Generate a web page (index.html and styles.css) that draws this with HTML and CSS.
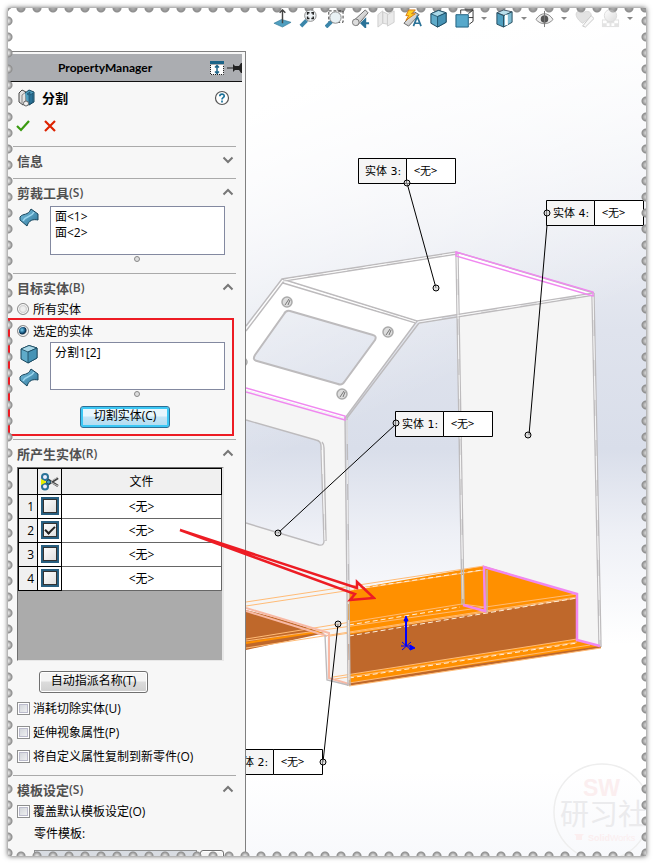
FILE: index.html
```html
<!DOCTYPE html>
<html lang="zh-CN">
<head>
    <meta charset="UTF-8">
    <meta name="viewport" content="width=device-width, initial-scale=1.0">
    <title>PropertyManager - 分割</title>
    <link rel="stylesheet" href="styles.css">
</head>
<body>
    <!-- shared icons -->
    <svg class="defs" aria-hidden="true">
        <defs>
            <linearGradient id="blue" x1="0" y1="0" x2="1" y2="1">
                <stop offset="0" stop-color="#7cc3e0"/>
                <stop offset="1" stop-color="#2a7297"/>
            </linearGradient>
            <linearGradient id="grey" x1="0" y1="0" x2="1" y2="1">
                <stop offset="0" stop-color="#fff"/>
                <stop offset="1" stop-color="#aaa"/>
            </linearGradient>
        </defs>
        <symbol id="chevron" viewBox="0 0 12 8">
            <path d="M1.5 6.500 6 2l4.500 4.500" fill="none" stroke="#777" stroke-width="2"/>
        </symbol>
        <symbol id="surface" viewBox="0 0 20 20">
            <path d="M1 9C4 5 9 8 12 1L19 6V12C14 11 10 12 8 18L1 12z" fill="url(#blue)" stroke="#17455c"/>
            <path d="M4 13C7 7 12 10 15 4" fill="none" stroke="#9bd6ee" stroke-width="1.500"/>
        </symbol>
        <symbol id="cube" viewBox="0 0 20 20">
            <path d="M2 5l8-3.500L18 4v10l-9 5-7-4z" fill="#5fabc9" stroke="#17455c"/>
            <path d="M2 5l7 3 9-4-8-2.500z" fill="#a9d8e8" stroke="#17455c" stroke-width=".8"/>
            <path d="M9 8v11l9-5V4z" fill="#4693b5" stroke="#17455c" stroke-width=".8"/>
        </symbol>
    </svg>

    <main class="sheet">
        <form class="panel">
            <header class="panel-header">
                <h1>PropertyManager</h1>
                <svg width="14" height="14" viewBox="0 0 14 14">
                    <path d="M0 0h14v3H0z" fill="#1c6488"/>
                    <path d="M.5 4v9.500h13V4" fill="#fff" stroke="#222" stroke-dasharray="1 1"/>
                    <path d="M7 5v7M5 6.500 7 4.500l2 2M5 10.500l2 2 2-2" fill="none" stroke="#1c6488" stroke-width="1.500"/>
                </svg>
                <svg width="15" height="10" viewBox="0 0 15 10">
                    <path d="M0 4.500h6V1l2 2h4l2-3h1v10h-1l-2-3H8L6 9V5.500H0z" fill="#222"/>
                </svg>
            </header>

            <div class="command">
                <div class="command-title">
                    <svg width="18" height="18" viewBox="0 0 18 18">
                        <path d="M1 4l3-3 4 2v11l-3 2-4-3z" fill="#e2e2e2" stroke="#444"/>
                        <path d="M4 6v9M4 6l4-3" stroke="#888"/>
                        <path d="M7 4l4-3 5 2v10l-5 3-2-1" fill="#4f9fc0" stroke="#17455c"/>
                        <path d="M9 5l3-2v3l3-2v9l-4 3V6z" fill="#2a7297" stroke="#17455c" stroke-width=".6"/>
                        <circle cx="8" cy="14.500" r="2.500" fill="#eee" stroke="#666"/>
                    </svg>
                    <h2>分割</h2>
                    <button type="button" class="help" aria-label="帮助">
                        <svg width="16" height="16" viewBox="0 0 16 16">
                            <circle cx="8" cy="8" r="6.500" fill="#fff" stroke="#555" stroke-width="1.200"/>
                            <path d="M5.800 6.300c0-3 4.600-2.800 4.400-.2C10.100 7.700 8 7.600 8 9.500M8 10.500v2" fill="none" stroke="#1d739c" stroke-width="1.700"/>
                        </svg>
                    </button>
                </div>
                <div class="command-actions">
                    <button type="button" aria-label="确定">
                        <svg width="14" height="12" viewBox="0 0 14 12"><path d="M1 6l4 4 8-9" fill="none" stroke="#3a9a10" stroke-width="2.200"/></svg>
                    </button>
                    <button type="button" aria-label="取消">
                        <svg width="12" height="12" viewBox="0 0 12 12"><path d="M1 1l10 10M11 1 1 11" stroke="#dd2200" stroke-width="2.200"/></svg>
                    </button>
                </div>
            </div>

            <section class="group group-info">
                <h3>信息<svg class="chevron down"><use href="#chevron"/></svg></h3>
            </section>

            <section class="group group-tools">
                <h3>剪裁工具<small>(S)</small><svg class="chevron"><use href="#chevron"/></svg></h3>
                <div class="picker picker-tools">
                    <div class="picker-icons"><svg><use href="#surface"/></svg></div>
                    <select multiple aria-label="剪裁工具">
                        <option>面&lt;1&gt;</option>
                        <option>面&lt;2&gt;</option>
                    </select>
                </div>
                <i class="grip"></i>
            </section>

            <section class="group group-target">
                <h3>目标实体<small>(B)</small><svg class="chevron"><use href="#chevron"/></svg></h3>
                <label class="radio"><input type="radio" name="target">所有实体</label>
                <label class="radio"><input type="radio" name="target" checked>选定的实体</label>
                <div class="picker">
                    <div class="picker-icons">
                        <svg><use href="#cube"/></svg>
                        <svg><use href="#surface"/></svg>
                    </div>
                    <select multiple aria-label="选定的实体">
                        <option>分割1[2]</option>
                    </select>
                </div>
                <i class="grip"></i>
                <button type="button" class="btn btn-primary">切割实体(C)</button>
                <div class="marker"></div>
            </section>

            <section class="group group-result">
                <h3>所产生实体<small>(R)</small><svg class="chevron"><use href="#chevron"/></svg></h3>
                <div class="table-box">
                    <table>
                        <thead>
                            <tr>
                                <th class="col-num"></th>
                                <th class="col-cut">
                                    <svg width="20" height="18" viewBox="0 0 20 18">
                                        <path d="M7 6l11 7M7 12l11-7" stroke="#444" stroke-width="2.500"/>
                                        <path d="M10 9l8-5M10 9l8 4" stroke="#ccc"/>
                                        <circle cx="5" cy="4" r="3" fill="#eef" stroke="#2a7297" stroke-width="2"/>
                                        <circle cx="5" cy="13.500" r="3" fill="#eef" stroke="#2a7297" stroke-width="2"/>
                                        <path d="M1 6l6 3-6 3z" fill="#e8f000"/>
                                        <circle cx="8.500" cy="9" r="2" fill="#4f9fc0" stroke="#17455c"/>
                                    </svg>
                                </th>
                                <th>文件</th>
                            </tr>
                        </thead>
                        <tbody>
                            <tr><th>1</th><td><input type="checkbox" aria-label="实体 1"></td><td>&lt;无&gt;</td></tr>
                            <tr><th>2</th><td><input type="checkbox" aria-label="实体 2" checked></td><td>&lt;无&gt;</td></tr>
                            <tr><th>3</th><td><input type="checkbox" aria-label="实体 3"></td><td>&lt;无&gt;</td></tr>
                            <tr><th>4</th><td><input type="checkbox" aria-label="实体 4"></td><td>&lt;无&gt;</td></tr>
                        </tbody>
                    </table>
                </div>
                <button type="button" class="btn btn-auto">自动指派名称(T)</button>
                <label class="check"><input type="checkbox">消耗切除实体(U)</label>
                <label class="check"><input type="checkbox">延伸视象属性(P)</label>
                <label class="check"><input type="checkbox">将自定义属性复制到新零件(O)</label>
            </section>

            <section class="group">
                <h3>模板设定<small>(S)</small><svg class="chevron"><use href="#chevron"/></svg></h3>
                <label class="check check-override"><input type="checkbox">覆盖默认模板设定(O)</label>
                <label class="template-label" for="template">零件模板:</label>
                <div class="template-row">
                    <input type="text" id="template" disabled>
                    <button type="button" class="btn" aria-label="浏览"></button>
                </div>
            </section>
        </form>

        <div class="view">
            <div class="toolbar">
                <button type="button" aria-label="正视于"><svg viewBox="0 0 20 20"><path d="M1 15l8-4 10 3-9 5z" fill="#4f9fc0" stroke="#2a6f90" stroke-width=".6"/><path d="M10 15V2M7 4l3-3 3 3" stroke="#444" stroke-width="1.500" fill="none"/></svg></button>
                <button type="button" aria-label="整屏显示全图"><svg viewBox="0 0 20 20"><path d="M8 12l-6 6" stroke="#3b86aa" stroke-width="4"/><circle cx="12" cy="7" r="6" fill="#eef3f6" stroke="#888"/><path d="M9 6V4h2M13 4h2v2M15 8v2h-2M11 10H9V8" fill="none" stroke="#222" stroke-width="1.500"/></svg></button>
                <button type="button" aria-label="局部放大"><svg viewBox="0 0 20 20"><path d="M4 2h15v12H4z" fill="none" stroke="#333" stroke-dasharray="3 2"/><path d="M7 13l-6 6" stroke="#3b86aa" stroke-width="4"/><circle cx="11" cy="9" r="6" fill="#e9f1f4" stroke="#888"/></svg></button>
                <button type="button" aria-label="上一视图"><svg viewBox="0 0 20 20"><path d="M2 13 15 1l3 3L7 17z" fill="url(#grey)" stroke="#666"/><circle cx="5" cy="14" r="3.500" fill="#ddd" stroke="#777"/><path d="M19 15h-6M15 11l-4 4 4 4z" stroke="#2a7297" stroke-width="2" fill="#2a7297"/></svg></button>
                <button type="button" class="dim" aria-label="剖面视图"><svg viewBox="0 0 20 20"><path d="M1 6l5-4v13l-5 4zM6 3l5 2v11l-5-1zM11 6l7-4v12l-7 4z" fill="#ccc" stroke="#888"/></svg></button>
                <button type="button" aria-label="动态注解视图"><svg viewBox="0 0 20 20"><path d="M1 15 12 3l5 3L6 18z" fill="url(#grey)" stroke="#666"/><path d="M6 1h7L9 5h4L3 12l3-5H3z" fill="#ffcf20" stroke="#d77911"/><path d="M11 18l4-10 4 10M12 15h6" stroke="#2a7297" stroke-width="1.800" fill="none"/></svg></button>
                <button type="button" aria-label="视图定向"><svg viewBox="0 0 20 20"><use href="#cube"/></svg></button>
                <button type="button" aria-label="显示样式"><svg viewBox="0 0 20 20"><path d="M6 5V1h13v12l-4 3M14 5l5-4M14 9h5" fill="none" stroke="#333"/><path d="M1 6h13v13H1z" fill="#58a9cb" stroke="#1f5f7e"/></svg></button>
                <span class="drop"></span>
                <button type="button" aria-label="隐藏类型"><svg viewBox="0 0 20 20"><path d="M2 4l7-3 9 2-8 4z" fill="#b9dfec" stroke="#456"/><path d="M2 4l7 3v12l-7-3z" fill="#4f9fc0" stroke="#264c5e"/><path d="M9 7l9-4v11l-9 5z" fill="#7ebbd2" stroke="#264c5e"/><path d="M12 6v11" stroke="#fff" stroke-width="3"/></svg></button>
                <span class="drop"></span>
                <button type="button" aria-label="隐藏所有类型"><svg viewBox="0 0 20 20"><path d="M1 11c5-8 13-8 18 0-5 6-13 6-18 0z" fill="#eee" stroke="#888"/><circle cx="10" cy="10.500" r="4" fill="#555"/><path d="M10 2v17" stroke="#777"/></svg></button>
                <span class="drop"></span>
                <button type="button" class="dim" aria-label="编辑外观"><svg viewBox="0 0 20 20"><path d="M8 15C-1 9 0 2 5 2c2 0 3 1 4 2 1-2 9-3 8 4z" fill="#bbb" stroke="#999"/><path d="M8 18l9-11 3 3-9 9z" fill="#eee" stroke="#777"/></svg></button>
                <button type="button" class="dim" aria-label="应用布景"><svg viewBox="0 0 20 20"><path d="M1 11h18v8H1z" fill="#bbb"/><path d="M2 12h4v3H2zM14 12h4v3h-4zM6 15h3v3H6zM11 15h3v3h-3z" fill="#fff"/><circle cx="10" cy="7" r="6.500" fill="url(#grey)" stroke="#aaa"/></svg></button>
                <span class="drop"></span>
            </div>

            <svg class="model" viewBox="246 8 400 848" preserveAspectRatio="xMinYMin meet">
                <!-- top and sloped faces -->
                <path d="M282 279 456 252 594 293 417 321z" fill="#fff"/>
                <path fill-rule="evenodd" fill="#fff" d="M282 279 417 321 345 418 246 390V328zM290 311 373 335q4 1 2 5L345 381q-3 5-7 3L257 361q-5-1-2-6L284 314q2-4 6-3z"/>
                <!-- side panel -->
                <path d="M457 315 594 294 601 647 577 640V594L484 566 486 612 462 605z" fill="#f5f5f5"/>
                <!-- tray -->
                <path d="M347 590 484 566 577 594 601 647 347 686z" fill="#ff9000"/>
                <path d="M577 594 601 600V647L577 640z" fill="#f5f5f5"/>
                <path d="M347 635 577 597V639L347 675z" fill="#bf682b"/>
                <path d="M347 683 601 646V648L347 686z" fill="#bf682b"/>
                <path d="M462 605 464 570 484 566V612z" fill="#ff9000"/>
                <path d="M246 610 330 632 246 650z" fill="#bf682b"/>
                <path d="M246 643 330 630" stroke="#ff9000" stroke-width="2"/>
                <!-- front panel with window -->
                <path fill-rule="evenodd" fill="#f5f5f5" d="M246 390 345 418 349 686 327 680V634L246 608zM246 420 316 440q5 1 5 6L324 541q0 5-5 4L246 523z"/>

                <g class="edge-orange">
                    <path d="M246 602 484 566M246 606 484 570M246 639 462 604 484 607M246 641 577 594M246 648 485 611 577 597M333 677 577 639M335 679 577 642M349 683 590 645M349 686 601 648M330 636 577 598"/>
                </g>
                <g class="edge-light"><path d="M349 590 482 570M349 625 460 607M349 636 577 598M349 678 577 643"/></g>
                <g class="edge-salmon"><path d="M246 608 329 633V678L349 684M246 611 327 636"/></g>

                <g class="edge">
                    <path d="M246 326 282 279 456 252 594 293M246 331 284 281 457 254M282 279 417 321M283 283 416 323M417 321 594 293M419 323 594 295"/>
                    <path d="M417 321 345 418 348 685 327 680 325 635M419 323 347 418 350 686"/>
                    <path d="M456 252 462 605M458 254 464 604M594 293 601 647M592 295 599 645M487 570V612"/>
                    <path d="M290 311 373 335q4 1 2 5L345 381q-3 5-7 3L257 361q-5-1-2-6L284 314q2-4 6-3z" stroke-width="2"/>
                    <path d="M246 420 316 440q5 1 5 6L324 541q0 5-5 4L246 523M322 442q2 2 2 6L326 541"/>
                </g>
                <path class="edge-white" d="M284 280 456 253M283 281 416 322M418 322 594 294M457 255 463 604M593 296 600 645M347 420 349 680M322 450 325 540"/>
                <g class="hole">
                    <circle cx="287" cy="302" r="5"/><circle cx="388" cy="332" r="5"/><circle cx="342" cy="394" r="5"/><circle cx="243" cy="362" r="4"/>
                    <path d="M285 305 289 299M288 305 290 300M386 335 390 329M389 335 391 330M340 397 344 391M343 397 345 392"/>
                </g>
                <g class="edge-pink">
                    <path d="M246 388 345 416V420L246 392M456 252 593 292V296L456 256z"/>
                    <path d="M463 605 485 611 484 567 577 594V640L600 646" stroke-width="2.500"/>
                </g>

                <!-- origin -->
                <g stroke="#00f" fill="#00f">
                    <path d="M406 646V620" stroke-width="2"/>
                    <path d="M404 621 406 616 408 621zM410 645 415 648 410 650z"/>
                    <path d="M402 642 411 650M402 650 411 642M401 646H411"/>
                </g>

                <g class="callout">
                    <path class="leader" d="M407 183 436 288M547 218V225L529 435M396 424 278 533M338 624 323 762"/>
                    <path class="cell" d="M358.500 158.500H406.500V183.500H358.500zM546.500 200.500H594.500V225.500H546.500zM395.500 411.500H443.500V436.500H395.500zM225.500 749.500H273.500V774.500H225.500z"/>
                    <path class="cell value" d="M406.500 158.500H455.500V183.500H406.500zM594.500 200.500H643.500V225.500H594.500zM443.500 411.500H492.500V436.500H443.500zM273.500 749.500H322.500V774.500H273.500z"/>
                    <circle cx="407" cy="183" r="3"/><circle cx="436" cy="288" r="3"/>
                    <circle cx="547" cy="213" r="3"/><circle cx="528" cy="435" r="3"/>
                    <circle cx="396" cy="423" r="3"/><circle cx="278" cy="533" r="3"/>
                    <circle cx="338" cy="624" r="3"/><circle cx="323" cy="762" r="3"/>
                    <text x="365" y="175">实体 3:</text><text class="none" x="414" y="175">&lt;无&gt;</text>
                    <text x="553" y="217">实体 4:</text><text class="none" x="602" y="217">&lt;无&gt;</text>
                    <text x="402" y="428">实体 1:</text><text class="none" x="451" y="428">&lt;无&gt;</text>
                    <text x="232" y="766">实体 2:</text><text class="none" x="281" y="766">&lt;无&gt;</text>
                </g>

                <g class="watermark">
                    <circle cx="602" cy="812" r="48"/>
                    <text class="wm-sw" x="583" y="796">SW</text>
                    <text class="wm-name" x="560" y="825">研习社</text>
                    <path d="M574 834h10l-2 2v4h-6v-4z"/>
                    <text class="wm-solid" x="588" y="841"><tspan>Solid</tspan>Works</text>
                </g>
            </svg>
        </div>

        <svg class="arrow" width="200" height="80" viewBox="176 524 200 80">
            <path d="M180 530 357 588V582L374 598 350 600 355 594z"/>
        </svg>
        <div class="edge-h top"></div>
        <div class="edge-h bottom"></div>
        <div class="edge-v left"></div>
        <div class="edge-v right"></div>
    </main>
</body>
</html>
```
FILE: styles.css
```css
* {
    box-sizing: border-box;
}
body {
    margin: 0;
    padding: 8px;
    background: #fff;
    font-family: "Open Sans", "Noto Sans CJK SC", sans-serif;
    font-size: 12px;
    color: #000;
    overflow: hidden;
}
button, input, select {
    font: inherit;
    color: inherit;
    margin: 0;
}
svg {
    display: block;
}
.defs {
    position: absolute;
    width: 0;
    height: 0;
}
.sheet {
    position: relative;
    display: flex;
    height: calc(100vh - 16px);
    background: #fff;
    box-shadow: 0 0 5px #555;
}

/* perforated border */
.edge-h, .edge-v {
    position: absolute;
    pointer-events: none;
}
.edge-h {
    left: 0;
    right: 0;
    height: 6px;
    background-size: 16px 6px;
    background-position: 5px 0;
}
.edge-v {
    top: 0;
    bottom: 0;
    width: 6px;
    background-size: 6px 16px;
    background-position: 0 5px;
}
.top {
    top: 0;
    background-image: radial-gradient(circle at 8px 0, #aaa 1px, #8c8c8c 4px, transparent 5px);
}
.bottom {
    bottom: 0;
    background-image: radial-gradient(circle at 8px 6px, #ddd 1px, #8c8c8c 4px, transparent 5px);
}
.left {
    left: 0;
    background-image: radial-gradient(circle at 0 8px, #ddd 1px, #8c8c8c 4px, transparent 5px);
}
.right {
    right: 0;
    background-image: radial-gradient(circle at 6px 8px, #ccc 1px, #8c8c8c 4px, transparent 5px);
}

/* property panel */
.panel {
    flex: none;
    width: 238px;
    margin-top: 43px;
    padding-top: 2px;
    background: #f7f7f7;
    border-top: 1px solid #808080;
    border-right: 1px solid #808080;
    overflow: hidden;
}
.panel-header {
    display: flex;
    align-items: center;
    gap: 3px;
    height: 28px;
    margin-right: 3px;
    background: #abadb1;
    border-bottom: 1px solid #111;
}
.panel-header h1 {
    flex: 1;
    margin: 0;
    padding-left: 50px;
    font-family: Lato, sans-serif;
    font-size: 12px;
    font-weight: 700;
}
.command {
    height: 64px;
    padding: 3px 15px 0 10px;
}
.command button, .toolbar button {
    padding: 0;
    border: 0;
    background: none;
}
.command-title {
    display: flex;
    align-items: center;
    height: 26px;
}
.command-title h2 {
    flex: 1;
    margin: 0 0 2px 6px;
    font-size: 13px;
    font-weight: 700;
}
.command-actions {
    display: flex;
    align-items: center;
    gap: 14px;
    height: 29px;
    margin-left: -2px;
}
.group {
    position: relative;
    margin: 0 9px 0 5px;
    padding: 0 0 0 4px;
    border-top: 1px solid #aaa;
}
.group h3 {
    display: flex;
    align-items: center;
    height: 24px;
    margin: 0;
    padding-top: 2px;
    font-size: 13px;
    font-weight: 700;
    color: #505050;
}
.group small {
    font-size: 12px;
    font-weight: 600;
}
.chevron {
    width: 12px;
    height: 8px;
    margin: 0 2px 0 auto;
}
.chevron.down {
    transform: rotate(180deg);
}
.group-info {
    height: 32px;
}
.group-tools {
    height: 95px;
}
.group-target {
    height: 166px;
}
.group-result {
    height: 336px;
}
.picker {
    display: flex;
    height: 48px;
    margin-right: 11px;
}
.picker-tools {
    height: 49px;
    margin-top: 3px;
}
.picker-icons {
    display: flex;
    flex-direction: column;
    gap: 4px;
    width: 33px;
    padding: 2px 0 0 2px;
}
.picker-icons svg {
    width: 20px;
    height: 20px;
}
.picker select {
    flex: 1;
    height: 100%;
    padding: 0 0 0 2px;
    background: #fff;
    border: 1px solid #8389a0;
    border-radius: 0;
    overflow: hidden;
}
.picker option {
    height: 16px;
    min-height: 16px;
    padding: 0 2px;
    line-height: 16px;
}
.grip {
    display: block;
    width: 6px;
    height: 6px;
    margin: 1px 0 0 117px;
    background: #ddd;
    border: 1px solid #888;
    border-radius: 50%;
}
.radio, .check {
    display: flex;
    align-items: center;
    gap: 4px;
    height: 22px;
}
.check {
    gap: 3px;
    height: 24px;
}
.check-override {
    height: 22px;
}
.radio input {
    appearance: none;
    width: 12px;
    height: 12px;
    background: radial-gradient(circle, #eee 2px, #ccc 4px);
    border: 1px solid #8c8c8c;
    border-radius: 50%;
    box-shadow: inset 0 0 0 1px #fff;
}
.radio input:checked {
    background: radial-gradient(circle at 4px 4px, #7fd4f5 0, #15537c 3px, #0b2a44 4px, #ddd 5px);
}
.check input {
    appearance: none;
    width: 13px;
    height: 13px;
    background: linear-gradient(135deg, #cbcfd5, #f6f6f6);
    border: 1px solid #8e8f8f;
    box-shadow: inset 0 0 0 1px #fff, inset 0 0 0 2px #bbc;
}
.btn {
    display: block;
    height: 22px;
    padding: 0 0 2px;
    line-height: 16px;
    background: linear-gradient(#f4f4f4 45%, #dcdcdc 50%, #cfcfcf);
    border: 1px solid #707070;
    border-radius: 3px;
    box-shadow: inset 0 0 0 1px #fff;
}
.btn-primary {
    width: 90px;
    margin: 9px 0 0 63px;
    background: linear-gradient(#e8f6fd 45%, #c4e5f6 50%, #b0dbf0);
    border-color: #2c6f96;
    box-shadow: inset 0 0 0 2px #3cc8f5;
}
.btn-auto {
    width: 109px;
    margin: 10px 0 3px 22px;
}
.marker {
    position: absolute;
    top: 44px;
    left: -5px;
    right: 2px;
    height: 118px;
    border: 2px solid #ed1c24;
    pointer-events: none;
}

/* resulting bodies */
.table-box {
    height: 194px;
    margin: 3px 12px 0 0;
    background: #ababab;
    border: 1px solid #6f6f6f;
    border-right: 2px solid #e8e8e8;
    border-bottom-color: #e8e8e8;
}
.table-box table {
    width: 100%;
    border-collapse: collapse;
    table-layout: fixed;
    background: #fff;
}
.table-box th, .table-box td {
    height: 24px;
    padding: 0;
    border: 1px solid #666;
    font-weight: 400;
    line-height: 16px;
    text-align: center;
}
.table-box thead th {
    height: 26px;
    background: #f0f0f0;
    border-color: #000;
}
.table-box tbody th {
    padding-right: 3px;
    background: #f0f0f0;
    border-color: #000;
    text-align: right;
}
.table-box td:nth-child(2) {
    border-color: #000;
}
.table-box .col-num {
    width: 19px;
}
.table-box .col-cut {
    width: 24px;
}
.col-cut svg {
    margin: 0 auto;
}
.table-box input {
    appearance: none;
    display: block;
    width: 18px;
    height: 18px;
    margin: 0 auto 2px;
    background: linear-gradient(135deg, #fff, #ddd);
    border: 2px solid #285f80;
    box-shadow: inset 0 0 0 1px #333;
}
.table-box input:checked::after {
    content: "";
    display: block;
    width: 8px;
    height: 4px;
    margin: 3px auto 0;
    border: solid #222;
    border-width: 0 0 2px 2px;
    transform: rotate(-45deg);
}

.template-label {
    display: block;
    height: 28px;
    padding-left: 17px;
    line-height: 24px;
}
.template-row {
    display: flex;
    gap: 3px;
    margin: 0 12px 0 17px;
}
.template-row input {
    flex: 1;
    min-width: 0;
    height: 20px;
    background: #d8dce2;
    border: 1px solid #8e8f8f;
}
.template-row .btn {
    width: 24px;
}

/* graphics area */
.view {
    position: relative;
    flex: 1;
    min-width: 0;
    overflow: hidden;
    background:
        linear-gradient(155deg, #fff 10%, rgba(255, 255, 255, 0) 45%),
        linear-gradient(#fff 0, #eceef4 24%, #dfe3ed 38%, #d9deea 52%, #eef0f6 62%, #fff 75%, #fff 90%, #f8f9fc 100%);
}
.toolbar {
    position: absolute;
    z-index: 1;
    top: 0;
    left: 0;
    display: flex;
    align-items: center;
    padding-left: 23px;
}
.toolbar button {
    width: 26px;
    height: 20px;
}
.toolbar svg {
    width: 19px;
    height: 19px;
    margin: 0 auto;
}
.toolbar .dim {
    opacity: .4;
}
.drop {
    width: 6px;
    margin: 0 4px;
    border: solid transparent;
    border-width: 3px 3px 0;
    border-top-color: #888;
}
.model {
    width: 100%;
    height: 100%;
    fill: none;
}
.edge {
    stroke: #bdbbbd;
    stroke-width: 1.4;
}
.edge-white {
    stroke: #fff;
    stroke-opacity: .7;
    stroke-dasharray: 24 16;
}
.edge-orange {
    stroke: #ffbb76;
}
.edge-light {
    stroke: #fff0dc;
    stroke-dasharray: 5 3;
}
.edge-salmon {
    stroke: #f8b9a5;
    stroke-width: 2;
}
.edge-pink {
    stroke: #f088f0;
    stroke-width: 1.4;
}
.hole {
    fill: #ddd;
    stroke: #aaa;
    stroke-width: 1.5;
}
.hole path {
    stroke: #777;
    stroke-width: 1;
}
.callout {
    fill: #f5f5f5;
    stroke: #000;
}
.callout .value {
    fill: #fff;
}
.callout .leader {
    fill: none;
}
.callout circle {
    fill: rgba(200, 200, 200, .6);
}
.callout text {
    fill: #000;
    stroke: none;
    font-family: "DejaVu Sans", "Noto Sans CJK SC", sans-serif;
    font-size: 11px;
}
.callout .none {
    font-family: "Noto Sans CJK SC", sans-serif;
}
.watermark {
    fill: #fbeeef;
}
.watermark circle {
    fill: none;
    stroke: #eee;
    stroke-width: 1.5;
}
.wm-sw {
    font: 700 23px "Liberation Sans", sans-serif;
}
.wm-name {
    fill: #ebebed;
    font: 400 29px "Liberation Serif", "Noto Sans CJK SC", serif;
}
.wm-solid {
    font: 9px "Liberation Sans", sans-serif;
}
.wm-solid tspan {
    font-weight: 700;
}
.arrow {
    position: absolute;
    top: 516px;
    left: 168px;
    fill: none;
    stroke: #ed1c24;
    stroke-width: 2.5;
    pointer-events: none;
}
```
